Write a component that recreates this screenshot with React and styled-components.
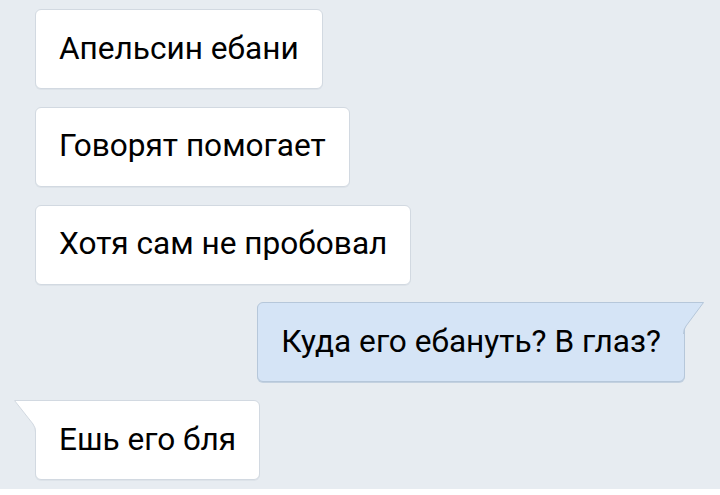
import styled, { createGlobalStyle } from "styled-components";

const GlobalStyle = createGlobalStyle`
  body {
    margin: 0;
    background: #ffffff;
    font-family: Roboto, "Noto Sans", sans-serif;
  }
`;

const Chat = styled.div`
  height: 489px;
  box-sizing: border-box;
  background: #e7ecf1;
  padding: 9px 35px 0 35px;
  display: flex;
  flex-direction: column;
  align-items: flex-start;
  gap: 17.75px;
  overflow: hidden;
`;

const Bubble = styled.div`
  position: relative;
  box-sizing: border-box;
  height: 80px;
  padding: 0 23px 2px 23px;
  display: flex;
  align-items: center;
  font-size: 31.6px;
  color: #000000;
  white-space: nowrap;
  background: ${(p) => (p.$out ? "#d5e4f6" : "#ffffff")};
  border: 1px solid ${(p) => (p.$out ? "#b6c7da" : "#d2d9e1")};
  border-radius: 6px;
  box-shadow: 0 1px 0 ${(p) => (p.$out ? "#c3d1e0" : "#dde3e9")};
  align-self: ${(p) => (p.$out ? "flex-end" : "flex-start")};
  ${(p) => p.$tail && (p.$out ? "border-top-right-radius: 0;" : "border-top-left-radius: 0;")}
`;

const Tail = styled.svg`
  position: absolute;
  top: -1px;
  width: 22px;
  height: 30px;
  overflow: visible;
  ${(p) => (p.$out ? "right: -21px;" : "left: -22px;")}
`;

function InTail() {
  return (
    <Tail viewBox="0 0 22 30">
      <path d="M22 0 L0 0 L19 24 Q22 28 22 32 Z" fill="#ffffff" />
      <path d="M22 0.5 L0.5 0.5 L19 24 Q21.5 27.5 21.5 32" fill="none" stroke="#d2d9e1" strokeWidth="1" />
    </Tail>
  );
}

function OutTail() {
  return (
    <Tail viewBox="0 0 22 30" $out>
      <path d="M0 0 L21 0 L3 24 Q0 28 0 32 Z" fill="#d5e4f6" />
      <path d="M0 0.5 L20.5 0.5 L3 24 Q0.5 27.5 0.5 32" fill="none" stroke="#b6c7da" strokeWidth="1" />
    </Tail>
  );
}

const messages = [
  { text: "Апельсин ебани" },
  { text: "Говорят помогает" },
  { text: "Хотя сам не пробовал" },
  { text: "Куда его ебануть? В глаз?", out: true, tail: true },
  { text: "Ешь его бля", tail: true },
];

export default function App() {
  return (
    <>
      <GlobalStyle />
      <Chat>
        {messages.map((m, i) => (
          <Bubble key={i} $out={m.out} $tail={m.tail}>
            {m.tail && (m.out ? <OutTail /> : <InTail />)}
            {m.text}
          </Bubble>
        ))}
      </Chat>
    </>
  );
}
